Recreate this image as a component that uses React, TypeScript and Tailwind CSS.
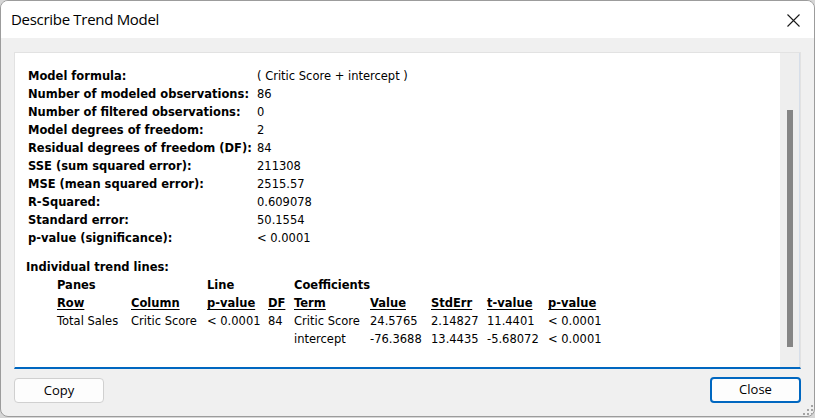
import React from 'react';

const summary: [string, string][] = [
  ['Model formula:', '( Critic Score + intercept )'],
  ['Number of modeled observations:', '86'],
  ['Number of filtered observations:', '0'],
  ['Model degrees of freedom:', '2'],
  ['Residual degrees of freedom (DF):', '84'],
  ['SSE (sum squared error):', '211308'],
  ['MSE (mean squared error):', '2515.57'],
  ['R-Squared:', '0.609078'],
  ['Standard error:', '50.1554'],
  ['p-value (significance):', '< 0.0001'],
];

const heads = ['Row', 'Column', 'p-value', 'DF', 'Term', 'Value', 'StdErr', 't-value', 'p-value'];

const rows = [
  ['Total Sales', 'Critic Score', '< 0.0001', '84', 'Critic Score', '24.5765', '2.14827', '11.4401', '< 0.0001'],
  ['', '', '', '', 'intercept', '-76.3688', '13.4435', '-5.68072', '< 0.0001'],
];

function ResizeGrip() {
  const dots = [
    [10, 0],
    [6, 4], [10, 4],
    [2, 8], [6, 8], [10, 8],
  ];
  return (
    <svg className="absolute right-[1px] bottom-[1px]" width="12" height="10" viewBox="0 0 12 10">
      {dots.map(([x, y], i) => (
        <rect key={i} x={x} y={y} width="2" height="2" fill="#a3a3a3" />
      ))}
    </svg>
  );
}

export default function App() {
  return (
    <div className="w-[815px] h-[418px] bg-[#d6d6d6] overflow-hidden">
      <div className="relative w-[815px] h-[417px] flex flex-col bg-[#f0f0f0] border border-[#9c9c9c] rounded-[8px] overflow-hidden">
        {/* Title bar */}
        <div className="h-[37px] bg-white flex items-center justify-between pl-[10px] pr-[14px] shrink-0">
          <span className="text-[15px] text-black font-['Open_Sans',sans-serif] tracking-[-0.3px]">Describe Trend Model</span>
          <svg width="13" height="13" viewBox="0 0 13 13" className="mt-[1px]">
            <path d="M0.5 0.5 L12.5 12.5 M12.5 0.5 L0.5 12.5" stroke="#1a1a1a" strokeWidth="1.1" fill="none" />
          </svg>
        </div>

        {/* Body */}
        <div className="flex-1 flex flex-col px-[13px] pt-[14px]">
          <div className="h-[317px] flex border-t border-x border-[#e2e2e2] border-b-2 border-b-[#0067c0]">
            <div className="flex-1 overflow-hidden bg-white pl-[13px] pt-[14px] font-['DejaVu_Sans',sans-serif] text-[11.5px] leading-[18px] text-black whitespace-nowrap">
              <div className="grid grid-cols-[229px_auto]">
                {summary.map(([k, v]) => (
                  <React.Fragment key={k}>
                    <span className="font-bold">{k}</span>
                    <span>{v}</span>
                  </React.Fragment>
                ))}
              </div>

              <div className="mt-[11px] -ml-[2px] font-bold">Individual trend lines:</div>
              <div className="ml-[29px] grid grid-cols-[74px_76px_61px_26px_76px_61px_56px_61px_auto]">
                <span className="col-span-2 font-bold">Panes</span>
                <span className="col-span-2 font-bold">Line</span>
                <span className="col-span-5 font-bold">Coefficients</span>
                {heads.map((h, i) => (
                  <span key={i} className="font-bold underline underline-offset-2">{h}</span>
                ))}
                {rows.map((r, ri) =>
                  r.map((c, ci) => <span key={`${ri}-${ci}`}>{c}</span>)
                )}
              </div>
            </div>
            {/* Scrollbar */}
            <div className="w-[20px] bg-[#eeeeee] border-r border-[#d6dee9] flex justify-center pt-[57px] pb-[20px]">
              <div className="w-[6px] h-[237px] bg-[#858585] ml-[1px]" />
            </div>
          </div>

          {/* Buttons */}
          <div className="flex justify-between items-start pt-[8px]">
            <button className="w-[90px] h-[25px] mt-[1px] bg-[#fdfdfd] border border-[#d0d0d0] rounded-[4px] text-[13px] text-black font-['Open_Sans',sans-serif] flex items-center justify-center">
              Copy
            </button>
            <button className="w-[91px] h-[26px] bg-[#fdfdfd] border-2 border-[#0067c0] rounded-[4px] text-[13px] text-black font-['Open_Sans',sans-serif] flex items-center justify-center">
              Close
            </button>
          </div>
        </div>
        <ResizeGrip />
      </div>
    </div>
  );
}
